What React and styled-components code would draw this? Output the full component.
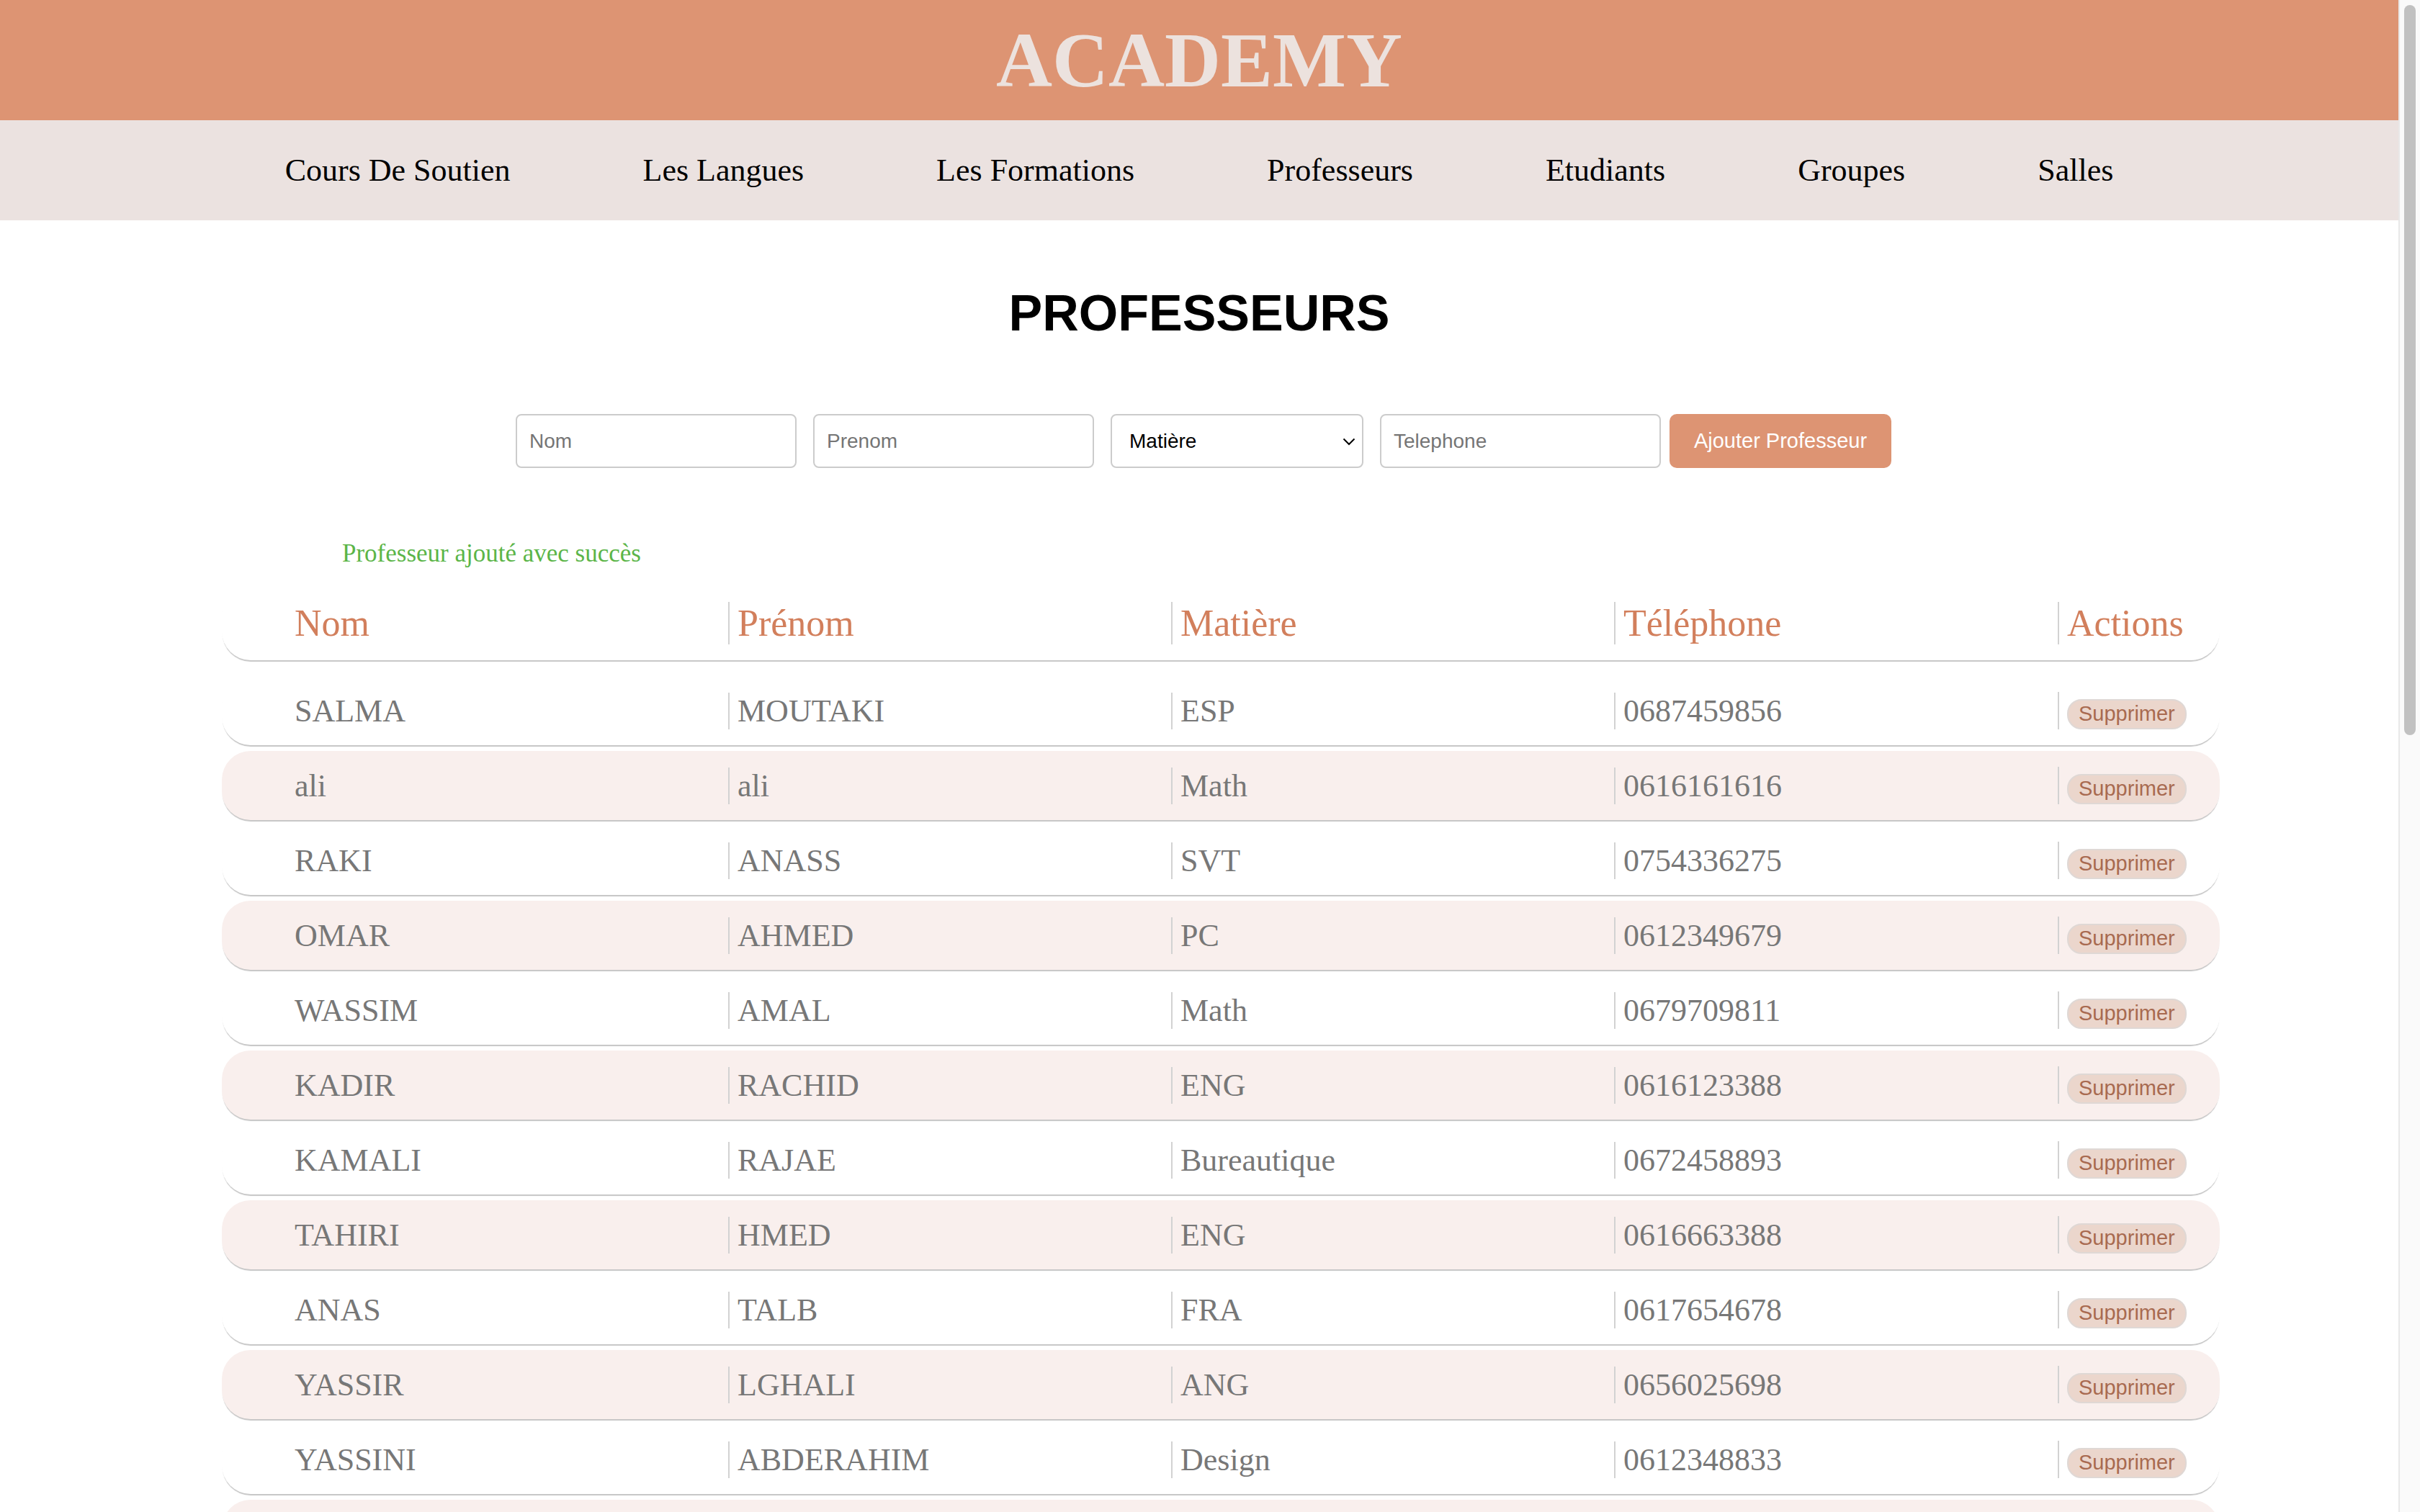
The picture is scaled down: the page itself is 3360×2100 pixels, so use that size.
import styled, { createGlobalStyle } from "styled-components";

const GlobalStyle = createGlobalStyle`
  body {
    margin: 0;
    background: #fff;
    font-family: "Liberation Serif", "Times New Roman", serif;
  }
`;

const professeurs = [
  { nom: "SALMA", prenom: "MOUTAKI", matiere: "ESP", tel: "0687459856" },
  { nom: "ali", prenom: "ali", matiere: "Math", tel: "0616161616" },
  { nom: "RAKI", prenom: "ANASS", matiere: "SVT", tel: "0754336275" },
  { nom: "OMAR", prenom: "AHMED", matiere: "PC", tel: "0612349679" },
  { nom: "WASSIM", prenom: "AMAL", matiere: "Math", tel: "0679709811" },
  { nom: "KADIR", prenom: "RACHID", matiere: "ENG", tel: "0616123388" },
  { nom: "KAMALI", prenom: "RAJAE", matiere: "Bureautique", tel: "0672458893" },
  { nom: "TAHIRI", prenom: "HMED", matiere: "ENG", tel: "0616663388" },
  { nom: "ANAS", prenom: "TALB", matiere: "FRA", tel: "0617654678" },
  { nom: "YASSIR", prenom: "LGHALI", matiere: "ANG", tel: "0656025698" },
  { nom: "YASSINI", prenom: "ABDERAHIM", matiere: "Design", tel: "0612348833" },
  { nom: "SAMIR", prenom: "KARIM", matiere: "Math", tel: "0661452378" },
];

const links = [
  "Cours De Soutien",
  "Les Langues",
  "Les Formations",
  "Professeurs",
  "Etudiants",
  "Groupes",
  "Salles",
];

// page area left of the browser scrollbar
const Page = styled.div`
  width: 3330px;
`;

// the window's scrollbar, as it shows in the screenshot
const ScrollTrack = styled.div`
  position: fixed;
  top: 0;
  right: 0;
  width: 28px;
  height: 100vh;
  background: #fafafa;
  border-left: 2px solid #e8e8e8;
`;

const ScrollThumb = styled.div`
  margin: 7px 6px 0;
  height: 1014px;
  border-radius: 8px;
  background: #c1c1c1;
`;

const Header = styled.header`
  height: 167px;
  background: #dd9473;
  display: flex;
  align-items: center;
  justify-content: center;
`;

const Logo = styled.h1`
  margin: 0;
  font-size: 108px;
  font-weight: bold;
  line-height: normal;
  color: #ece2de;
`;

const Nav = styled.nav`
  height: 139px;
  background: #ebe2e0;
  display: flex;
  align-items: center;
  justify-content: center;
  gap: 184px;
`;

const NavLink = styled.a`
  font-size: 44px;
  color: #000;
  text-decoration: none;
`;

const Title = styled.h2`
  margin: 88px 0 0;
  text-align: center;
  font-family: "Liberation Sans", Arial, sans-serif;
  font-size: 70px;
  font-weight: bold;
  line-height: 82px;
  color: #000;
`;

const Form = styled.form`
  margin-top: 99px;
  padding-left: 12px;
  display: flex;
  align-items: center;
  justify-content: center;
  gap: 23px;
`;

const Field = styled.input`
  box-sizing: border-box;
  width: 390px;
  height: 75px;
  padding: 0 17px;
  border: 2px solid #cccccc;
  border-radius: 8px;
  background: #fff;
  font-family: "Liberation Sans", Arial, sans-serif;
  font-size: 28px;
  color: #000;
  outline: none;

  &::placeholder {
    color: #757575;
  }
`;

const SelectBox = styled.div`
  position: relative;
  width: 351px;
  height: 75px;
`;

const Select = styled.select`
  box-sizing: border-box;
  width: 100%;
  height: 100%;
  padding: 0 40px 0 24px;
  appearance: none;
  border: 2px solid #cccccc;
  border-radius: 8px;
  background: #fff;
  font-family: "Liberation Sans", Arial, sans-serif;
  font-size: 28px;
  color: #000;
  outline: none;
`;

const Chevron = styled.svg`
  position: absolute;
  right: 11px;
  top: 33px;
  pointer-events: none;
`;

const AddButton = styled.button`
  width: 308px;
  height: 75px;
  margin-left: -11px;
  border: none;
  border-radius: 10px;
  background: #dd9473;
  color: #fff;
  font-family: "Liberation Sans", Arial, sans-serif;
  font-size: 29px;
  cursor: pointer;
`;

const Message = styled.p`
  margin: 99px 0 0;
  padding-left: 475px;
  font-size: 35px;
  line-height: normal;
  color: #5bb548;
`;

const Table = styled.div`
  margin: 24px 248px 0 308px;
`;

const Row = styled.div`
  display: grid;
  grid-template-columns: 615px 615px 615px 616px 1fr;
  align-items: center;
  height: ${(p) => (p.$head ? 104 : 96)}px;
  margin-bottom: ${(p) => (p.$head ? 22 : 8)}px;
  padding-left: 88px;
  border-radius: 40px;
  background: ${(p) => (p.$shaded ? "#f9efed" : "#fff")};
  box-shadow: 0 3px 1px -1px #c6c6c6;
`;

const Cell = styled.div`
  justify-self: start;
  padding-left: ${(p) => (p.$first ? 13 : 11)}px;
  border-left: ${(p) => (p.$first ? "none" : "2px solid #d2d2d2")};
  font-size: ${(p) => (p.$head ? 52 : 44)}px;
  line-height: normal;
  color: ${(p) => (p.$head ? "#d27f5c" : "#777777")};
  white-space: nowrap;
`;

const DeleteButton = styled.button`
  display: inline-block;
  height: 42px;
  padding: 0 14px;
  border: 2px solid #dfd8d5;
  border-radius: 20px;
  background: #ebd6cc;
  color: #a86a50;
  font-family: "Liberation Sans", Arial, sans-serif;
  font-size: 29px;
  cursor: pointer;
`;

const App = () => {
  return (
    <Page>
      <GlobalStyle />
      <Header>
        <Logo>ACADEMY</Logo>
      </Header>
      <Nav>
        {links.map((l) => (
          <NavLink key={l} href="#">
            {l}
          </NavLink>
        ))}
      </Nav>

      <Title>PROFESSEURS</Title>

      <Form onSubmit={(e) => e.preventDefault()}>
        <Field placeholder="Nom" />
        <Field placeholder="Prenom" />
        <SelectBox>
          <Select defaultValue="">
            <option value="">Matière</option>
            <option>Math</option>
            <option>PC</option>
            <option>SVT</option>
          </Select>
          <Chevron width="18" height="11" viewBox="0 0 18 11">
            <polyline
              points="1.5,1.5 9,9 16.5,1.5"
              fill="none"
              stroke="#000"
              strokeWidth="2"
            />
          </Chevron>
        </SelectBox>
        <Field placeholder="Telephone" />
        <AddButton type="submit">Ajouter Professeur</AddButton>
      </Form>

      <Message>Professeur ajouté avec succès</Message>

      <Table>
        <Row $head>
          <Cell $head $first>Nom</Cell>
          <Cell $head>Prénom</Cell>
          <Cell $head>Matière</Cell>
          <Cell $head>Téléphone</Cell>
          <Cell $head>Actions</Cell>
        </Row>
        {professeurs.map((p, i) => (
          <Row key={p.tel} $shaded={i % 2 === 1}>
            <Cell $first>{p.nom}</Cell>
            <Cell>{p.prenom}</Cell>
            <Cell>{p.matiere}</Cell>
            <Cell>{p.tel}</Cell>
            <Cell>
              <DeleteButton>Supprimer</DeleteButton>
            </Cell>
          </Row>
        ))}
      </Table>

      <ScrollTrack>
        <ScrollThumb />
      </ScrollTrack>
    </Page>
  );
};

export default App;
